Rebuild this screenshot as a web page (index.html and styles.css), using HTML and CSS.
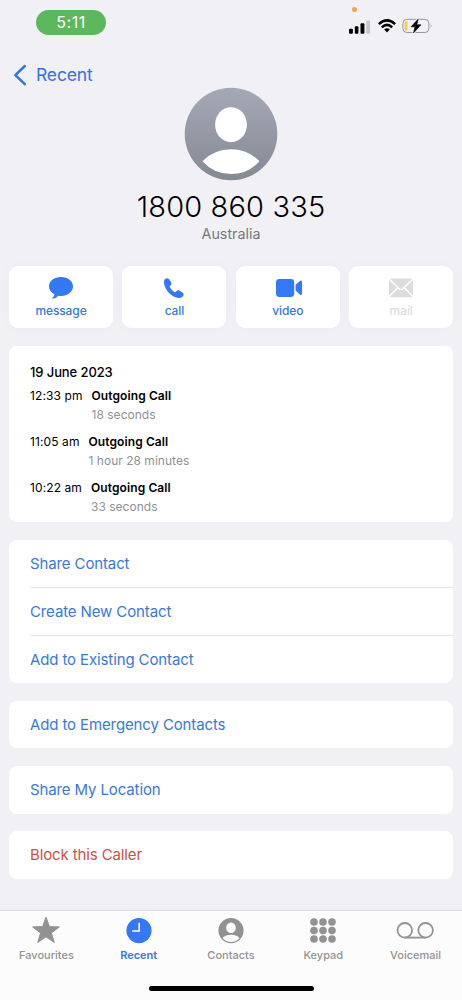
FILE: index.html
```html
<!DOCTYPE html>
<html lang="en">
<head>
<meta charset="utf-8">
<title>Recent call</title>
<link rel="stylesheet" href="styles.css">
</head>
<body>
<div class="phone">
  <header class="status">
    <span class="clock">5:11</span>
    <div class="indicators">
      <i class="mic-dot"></i>
      <svg class="signal" width="22" height="14" viewBox="0 0 22 14"><g fill="#000"><rect x="0" y="8.8" width="3.9" height="5" rx="1"/><rect x="5.8" y="6.2" width="3.6" height="7.6" rx="1"/><rect x="11.5" y="3.2" width="3.9" height="10.6" rx="1"/></g><rect x="17.3" y="0.6" width="3.7" height="13.2" rx="1" fill="#c6c6c9"/></svg>
      <svg class="wifi" width="18" height="14" viewBox="0 0 18 14"><g fill="none" stroke="#000" stroke-width="2.5"><path d="M.9 5.1Q9-2.3 17.1 5.1"/><path d="M3.8 8.3Q9 3.5 14.2 8.3"/></g><path d="M6.1 10.3Q9 8 11.9 10.3L9 13.5Z"/></svg>
      <svg class="battery" width="31" height="16" viewBox="0 0 31 16"><rect x=".9" y="1.3" width="26" height="13.2" rx="4" fill="none" stroke="#98989c"/><path d="M28.7 5.8Q30.3 7.9 28.7 10Z" fill="#98989c"/><path d="M4 3.3H5.5V12.6H4Q2.6 12.6 2.6 11V5Q2.6 3.3 4 3.3Z" fill="#f3cf4f"/><path d="M16.2.9L9.1 8.8H13L11.5 15L19 6.8H14.8Z" stroke="#f1f0f5" stroke-width="2.4"/><path d="M16.2 1L9.1 8.8H13L11.5 14.9L19 6.8H14.8Z" stroke="#000" stroke-width=".6" stroke-linejoin="round"/></svg>
    </div>
  </header>
  <nav class="back">
    <svg width="14" height="22" viewBox="0 0 14 22"><path d="M11.8 2L2.3 11.2L11.8 20.2" fill="none" stroke="#3174e8" stroke-width="2.5" stroke-linecap="round" stroke-linejoin="round"/></svg>
    <span class="t-recent">Recent</span>
  </nav>
  <section class="profile">
    <svg width="94" height="94" viewBox="0 0 94 94"><defs><linearGradient id="av" x2="0" y2="1"><stop offset="0" stop-color="#a5a9b6"/><stop offset="1" stop-color="#858993"/></linearGradient></defs><circle cx="47" cy="47" r="46.3" fill="url(#av)"/><ellipse cx="47" cy="37.7" rx="15.9" ry="17.5" fill="#fff"/><path d="M18.4 74.3Q30 62.3 47 62.3T75.4 74.3Q64 87.1 47 87.1T18.4 74.3Z" fill="#fff"/></svg>
    <h1><span class="t-number">1800 860 335</span></h1>
    <p><span class="t-country">Australia</span></p>
  </section>
  <section class="actions">
    <button class="action"><svg width="30" height="26" viewBox="0 0 30 26"><path d="M15 2C8.2 2 3 6 3 11.2C3 14.7 5 17.6 8.4 19.2C8.2 21 7.5 22.1 6.3 23.1Q6.1 24 7.2 23.8Q10.3 23.1 12.2 20.7Q13.6 21 15 21C21.8 21 27 16.6 27 11.3S21.8 2 15 2Z"/></svg><span class="t-message">message</span></button>
    <button class="action"><svg width="30" height="26" viewBox="0 0 30 26"><path d="M7 3.5C5.3 4.4 4.7 6 5 8.2C6 15.4 13 22.5 19.7 23C22 23.1 23.6 22.2 24.5 20.5Q25.2 18.9 23.7 17.8L20.3 15.6Q18.8 14.8 17.6 15.9L16.5 16.9Q15.7 17.4 14.8 16.7Q12.3 14.8 10.8 12.3Q10.4 11.5 11 10.9L12 9.9Q13 8.7 12.1 7.2L9.9 4.1Q8.6 2.7 7 3.5Z"/></svg><span class="t-call">call</span></button>
    <button class="action"><svg width="30" height="26" viewBox="0 0 30 26"><rect x="3" y="4" width="18.2" height="18" rx="3.4"/><path d="M22.6 9.8L26.9 5.9Q29 4.6 29 6.8V18.4Q29 20.8 26.9 19.4L22.6 15.6Z"/></svg><span class="t-video">video</span></button>
    <button class="action off"><svg width="30" height="26" viewBox="0 0 30 26"><rect x="3" y="3.5" width="24" height="18.8" rx="2.5"/><path d="M3.2 4.2L13.4 14Q15 15.3 16.6 14L26.8 4.2M3.2 21.5L11.4 13M18.6 13L26.8 21.5" fill="none" stroke="#fff" stroke-width="1.4"/></svg><span class="t-mail">mail</span></button>
  </section>
  <section class="card log">
    <h2><span class="t-date">19 June 2023</span></h2>
    <div class="entry"><time class="t-time1">12:33 pm</time><div><strong>Outgoing Call</strong><small class="t-dur1">18 seconds</small></div></div>
    <div class="entry"><time class="t-time2">11:05 am</time><div><strong>Outgoing Call</strong><small class="t-dur2">1 hour 28 minutes</small></div></div>
    <div class="entry"><time class="t-time3">10:22 am</time><div><strong>Outgoing Call</strong><small class="t-dur3">33 seconds</small></div></div>
  </section>
  <section class="card menu">
    <a class="row"><span class="t-share">Share Contact</span></a>
    <a class="row"><span class="t-create">Create New Contact</span></a>
    <a class="row"><span class="t-existing">Add to Existing Contact</span></a>
  </section>
  <section class="card menu single"><a class="row"><span class="t-emergency">Add to Emergency Contacts</span></a></section>
  <section class="card menu single"><a class="row"><span class="t-location">Share My Location</span></a></section>
  <section class="card menu single"><a class="row danger"><span class="t-block">Block this Caller</span></a></section>
  <footer class="tabbar">
    <div class="tabs">
      <a class="tab"><svg width="40" height="30" viewBox="0 0 40 30"><path d="M20 2.2L23.4 11.6L33.4 11.9L25.4 18L28.3 27.6L20 21.8L11.7 27.6L14.6 18L6.6 11.9L16.6 11.6Z" stroke="#929292" stroke-linejoin="round"/></svg><span class="t-fav">Favourites</span></a>
      <a class="tab on"><svg width="40" height="30" viewBox="0 0 40 30"><circle cx="20" cy="15.6" r="12.6"/><path d="M20.2 7.7V16H13.2" fill="none" stroke="#fff" stroke-width="1.6"/></svg><span class="t-rec">Recent</span></a>
      <a class="tab"><svg width="40" height="30" viewBox="0 0 40 30"><circle cx="20" cy="15.6" r="12.6"/><ellipse cx="20" cy="12.8" rx="4.8" ry="5.3" fill="#fcfcfc"/><path d="M11.5 23.3Q13.7 19.7 20 19.7T28.5 23.3Q25 26.9 20 26.9T11.5 23.3Z" fill="#fcfcfc"/></svg><span class="t-con">Contacts</span></a>
      <a class="tab"><svg width="40" height="30" viewBox="0 0 40 30"><g><circle cx="11" cy="7" r="3.8"/><circle cx="20" cy="7" r="3.8"/><circle cx="29" cy="7" r="3.8"/><circle cx="11" cy="15.5" r="3.8"/><circle cx="20" cy="15.5" r="3.8"/><circle cx="29" cy="15.5" r="3.8"/><circle cx="11" cy="24" r="3.8"/><circle cx="20" cy="24" r="3.8"/><circle cx="29" cy="24" r="3.8"/></g></svg><span class="t-key">Keypad</span></a>
      <a class="tab"><svg width="40" height="30" viewBox="0 0 40 30"><g fill="none" stroke="#929292" stroke-width="1.8"><circle cx="8.8" cy="15.3" r="7.3"/><circle cx="29.6" cy="15.3" r="7.3"/><path d="M8.8 22.6H29.6"/></g></svg><span class="t-voice">Voicemail</span></a>
    </div>
    <i class="home"></i>
  </footer>
</div>
</body>
</html>
```
FILE: styles.css
```css
* { box-sizing: border-box; }
body { margin: 0; background: #f1f0f5; font-family: Inter, "Liberation Sans", sans-serif; color: #000; }
span, time, strong, small { white-space: nowrap; }
svg { display: block; flex: none; }
.phone { width: 462px; height: 1000px; overflow: hidden; display: flex; flex-direction: column; background: #f1f0f5; }
.status { height: 59px; padding: 10px 29px 0 36px; display: flex; justify-content: space-between; align-items: flex-start; }
.clock { width: 70px; height: 25px; border-radius: 12.5px; background: #5db85d; color: #fff; font-size: 16px; line-height: 25px; text-align: center; letter-spacing: .5px; }
.indicators { position: relative; display: flex; align-items: center; gap: 6.5px; padding-top: 8px; }
.mic-dot { position: absolute; left: 2.5px; top: -3px; width: 5px; height: 5px; border-radius: 50%; background: #e9a84c; }
.signal { margin-top: 1px; }
.back { height: 28px; padding: 3px 0 0 13px; display: flex; align-items: center; gap: 9px; color: #3174e8; font-size: 17.5px; line-height: 22px; letter-spacing: -.15px; }
.profile { height: 179px; display: flex; flex-direction: column; align-items: center; }
.profile h1 { margin: 7px 0 0; font-size: 29px; font-weight: 360; line-height: 38px; letter-spacing: .15px; }
.profile p { margin: 0; font-size: 14.3px; line-height: 15px; color: #77777b; letter-spacing: 0; }
.actions { display: grid; grid-template-columns: repeat(4, 104px); gap: 9.4px; padding-left: 9px; height: 62px; }
.action { border: 0; padding: 9px 0 0; border-radius: 9px; background: #fff; box-shadow: 0 0 14px rgba(0,0,0,.025); display: flex; flex-direction: column; align-items: center; color: #3579e0; fill: #3478f6; font: 450 12px/16px Inter, sans-serif; letter-spacing: -.1px; }
.action span { margin-top: 2px; }
.off { color: #dddddf; fill: #dcdcdd; }
.card { margin: 18px 9px 0; width: 444.4px; background: #fff; border-radius: 8px; flex: none; }
.log { height: 176.4px; padding: 17px 21px 0; }
.log h2 { margin: 0 0 4px; font-size: 13px; line-height: 19px; font-weight: 450; letter-spacing: -.1px; }
.entry { display: flex; gap: 9px; height: 46px; font-size: 12px; line-height: 19px; }
.entry time { letter-spacing: .1px; }
.entry strong, .entry small { display: block; font-size: 12px; letter-spacing: .1px; }
.entry strong { font-weight: 600; }
.entry small { line-height: 19px; color: #919194; letter-spacing: .02px; }
.menu { height: 143px; padding-left: 21px; }
.single { height: 47.8px; margin-top: 17.3px; }
.row { display: flex; align-items: center; height: 47px; font-size: 15px; color: #3979dc; letter-spacing: -.12px; }
.row + .row { border-top: 1px solid #e4e4e7; height: 48px; }
.single .row { height: 48px; }
.danger { color: #d05045; }
.tabbar { margin-top: auto; height: 90px; border-top: 1px solid #dedee2; background: #fcfcfd; display: flex; flex-direction: column; align-items: center; justify-content: space-between; flex: none; }
.tabs { display: grid; grid-template-columns: repeat(5, 92.3px); width: 461.5px; }
.tab { display: flex; flex-direction: column; align-items: center; padding-top: 4px; color: #929292; fill: #929292; font-size: 11px; font-weight: 500; line-height: 14px; }
.tab span { margin-top: 3px; }
.on { color: #3478e8; fill: #3478f6; font-weight: 600; }
.home { width: 165px; height: 5px; border-radius: 3px; background: #000; margin-bottom: 9px; }
```
